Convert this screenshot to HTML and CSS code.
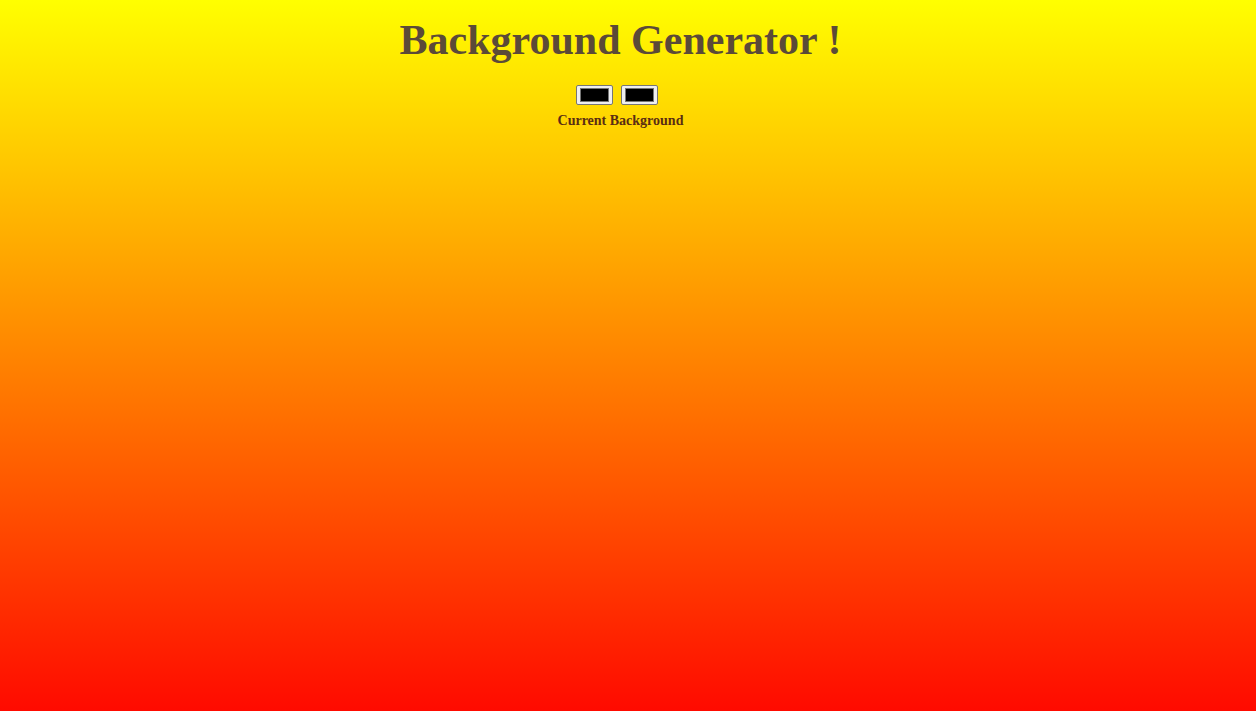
FILE: index.html
```html
<!DOCTYPE html>
<html>
<head>
<meta charset="utf-8">
<title>Background Generator</title>
<link rel="stylesheet" href="styles.css">
</head>
<body>
<h1 class="title">Background Generator !</h1>
<div class="pickers">
  <input class="color" type="color" name="color1" value="#000000">
  <input class="color" type="color" name="color2" value="#000000">
</div>
<h3 class="current">Current Background</h3>
</body>
</html>
```
FILE: styles.css
```css
html {
  height: 100%;
}
body {
  margin: 0;
  padding-right: 15px;
  min-height: 100%;
  background: linear-gradient(to bottom, #ffff00, #ff0a00);
  font-family: "Liberation Serif", "Times New Roman", serif;
  text-align: center;
}
.title {
  margin: 0;
  padding-top: 14px;
  font-size: 42px;
  font-weight: bold;
  line-height: 52px;
  color: #5b4a38;
}
.pickers {
  margin-top: 19px;
  padding-right: 7px;
  display: flex;
  justify-content: center;
  gap: 8px;
  height: 20px;
}
.color {
  width: 37px;
  height: 20px;
  margin: 0;
  padding: 2px 3px;
  box-sizing: border-box;
  border: 1px solid #767676;
  border-radius: 2px;
  background: #efefef;
}
.color::-webkit-color-swatch-wrapper {
  padding: 0;
}
.color::-webkit-color-swatch {
  border: 1px solid #777;
  border-radius: 0;
}
.current {
  margin: 7px 0 0;
  font-size: 14px;
  line-height: 18px;
  color: #5a2d14;
}
```
